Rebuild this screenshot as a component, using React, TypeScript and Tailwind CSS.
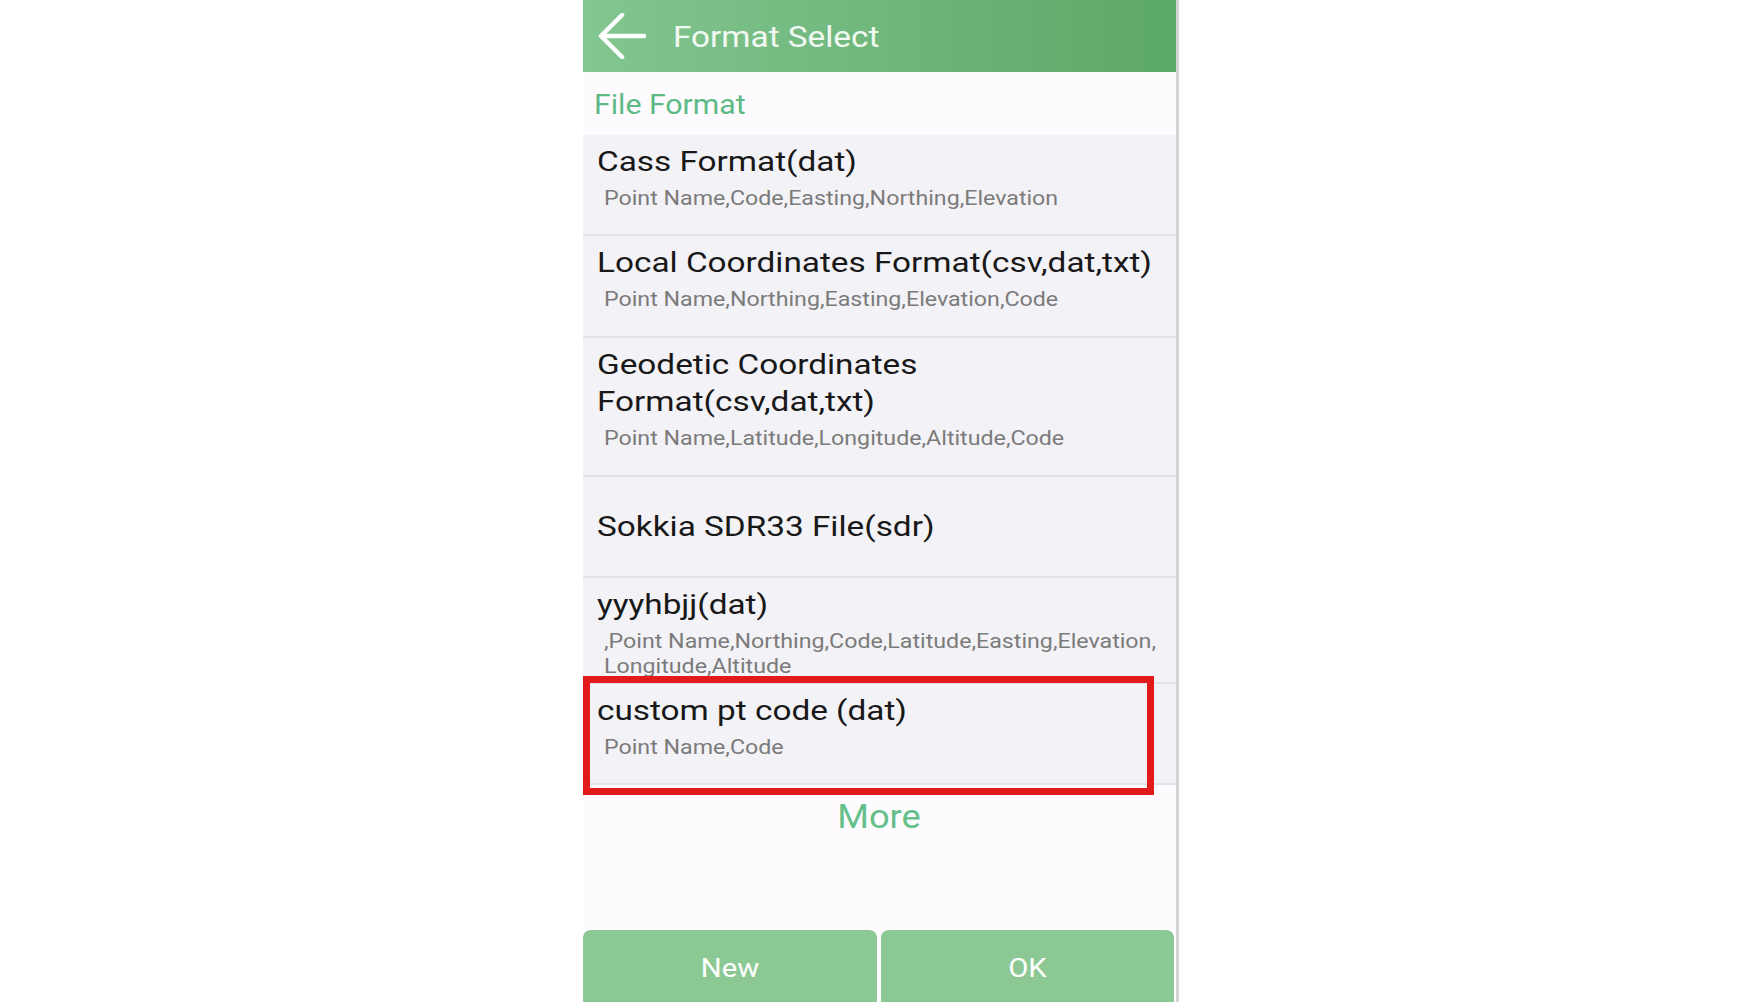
import React from "react";

type Item = { title: string[]; sub?: string[]; h: string; marked?: boolean };

const items: Item[] = [
  { title: ["Cass Format(dat)"], sub: ["Point Name,Code,Easting,Northing,Elevation"], h: "h-[101px]" },
  { title: ["Local Coordinates Format(csv,dat,txt)"], sub: ["Point Name,Northing,Easting,Elevation,Code"], h: "h-[102px]" },
  { title: ["Geodetic Coordinates", "Format(csv,dat,txt)"], sub: ["Point Name,Latitude,Longitude,Altitude,Code"], h: "h-[139px]" },
  { title: ["Sokkia SDR33 File(sdr)"], h: "h-[101px]" },
  {
    title: ["yyyhbjj(dat)"],
    sub: [",Point Name,Northing,Code,Latitude,Easting,Elevation,", "Longitude,Altitude"],
    h: "h-[106px]",
  },
  { title: ["custom pt code (dat)"], sub: ["Point Name,Code"], h: "h-[101px]", marked: true },
];

function Row({ item }: { item: Item }) {
  return (
    <div className={`relative ${item.h} shrink-0 bg-[#f3f2f6] border-b-2 border-[#e4e3e7]`}>
      <div className={`h-full overflow-hidden pl-[14px] flex flex-col ${item.sub ? "pt-[8px]" : "justify-center"}`}>
        {item.title.map((t) => (
          <div key={t} className="text-[28px] leading-[37px] text-[#181818] whitespace-nowrap">
            <span className="inline-block origin-left scale-x-[1.19]">{t}</span>
          </div>
        ))}
        {item.sub && (
          <div className="mt-[6px] pl-[7px] text-[20px] leading-[25px] text-[#7b7b7b] whitespace-nowrap">
            {item.sub.map((s) => (
              <div key={s}>
                <span className="inline-block origin-left scale-x-[1.16]">{s}</span>
              </div>
            ))}
          </div>
        )}
      </div>
      {item.marked && (
        <div className="absolute left-0 right-[22px] top-[-8px] bottom-[-12px] border-[7px] border-[#e21a1c]" />
      )}
    </div>
  );
}

export default function App() {
  return (
    <div className="h-screen w-full bg-white flex justify-center overflow-hidden" style={{ fontFamily: "Roboto, 'Noto Sans', sans-serif" }}>
      <div className="w-[596px] h-full flex flex-col bg-[#fdfbfe] border-r-[3px] border-[#d3d3d3] ml-[-1px]">
        <header className="h-[72px] shrink-0 flex items-center bg-gradient-to-r from-[#82c691] to-[#5ca866]">
          <svg width="48" height="46" viewBox="0 0 48 46" className="ml-[15px]" fill="none">
            <path d="M3 23 L24 2 M3 23 L24 44 M3 23 L46 23" stroke="white" strokeWidth="4.5" strokeLinecap="round" />
          </svg>
          <span className="ml-[27px] text-[30px] text-white/90 inline-block origin-left scale-x-[1.11]">Format Select</span>
        </header>
        <div className="h-[63px] shrink-0 flex items-center pl-[11px] pt-[4px] text-[27px] text-[#5dba84]">
          <span className="inline-block origin-left scale-x-[1.12]">File Format</span>
        </div>
        {items.map((it) => (
          <Row key={it.title.join(" ")} item={it} />
        ))}
        <div className="h-[60px] shrink-0 flex items-center justify-center pt-[4px] text-[33px] text-[#66bf8a]">
          <span className="inline-block scale-x-[1.1]">More</span>
        </div>
        <div className="flex-1" />
        <div className="h-[72px] shrink-0 flex gap-[4px] pr-[2px]">
          <button className="flex-1 rounded-t-[8px] bg-[#8cc894] text-white text-[25px] pt-[6px]">
            <span className="inline-block scale-x-[1.17]">New</span>
          </button>
          <button className="flex-1 rounded-t-[8px] bg-[#8cc894] text-white text-[25px] pt-[6px]">
            <span className="inline-block scale-x-[1.17]">OK</span>
          </button>
        </div>
      </div>
    </div>
  );
}
